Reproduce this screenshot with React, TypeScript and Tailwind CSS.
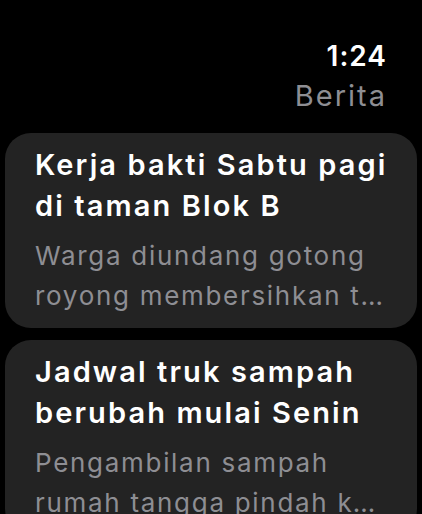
import React from "react";

// Watch-style news list; excerpt is shown as two lines, second one truncated
const news = [
  {
    id: "1",
    title: "Kerja bakti Sabtu pagi di taman Blok B",
    lines: ["Warga diundang gotong", "royong membersihkan taman dan saluran air"],
  },
  {
    id: "2",
    title: "Jadwal truk sampah berubah mulai Senin",
    lines: ["Pengambilan sampah", "rumah tangga pindah ke pagi hari"],
  },
];

export default function App() {
  return (
    <div className="min-h-screen bg-black overflow-hidden font-['Inter',sans-serif]">
      {/* Header */}
      <div className="flex flex-col items-end pt-[36px] pr-[35px]">
        <div className="text-[28px] leading-[40px] font-semibold tracking-[1px] text-white">1:24</div>
        <div className="text-[29px] leading-[40px] tracking-[2px] text-[#8e8e93]">Berita</div>
      </div>

      {/* Cards */}
      <div className="flex flex-col gap-[12px] px-[5px] mt-[17px]">
        {news.map((item) => (
          <div key={item.id} className="bg-[#232323] rounded-[26px] pl-[30px] pr-[26px] pt-[11px] pb-[12px]">
            <div className="text-[29px] leading-[41px] font-semibold tracking-[2.1px] text-white">{item.title}</div>
            <div className="mt-[10px] text-[26px] leading-[40px] tracking-[1.7px] text-[#8e8e93]">
              {item.lines.map((line, i) => (
                <div key={i} className="truncate">{line}</div>
              ))}
            </div>
          </div>
        ))}
      </div>
    </div>
  );
}
